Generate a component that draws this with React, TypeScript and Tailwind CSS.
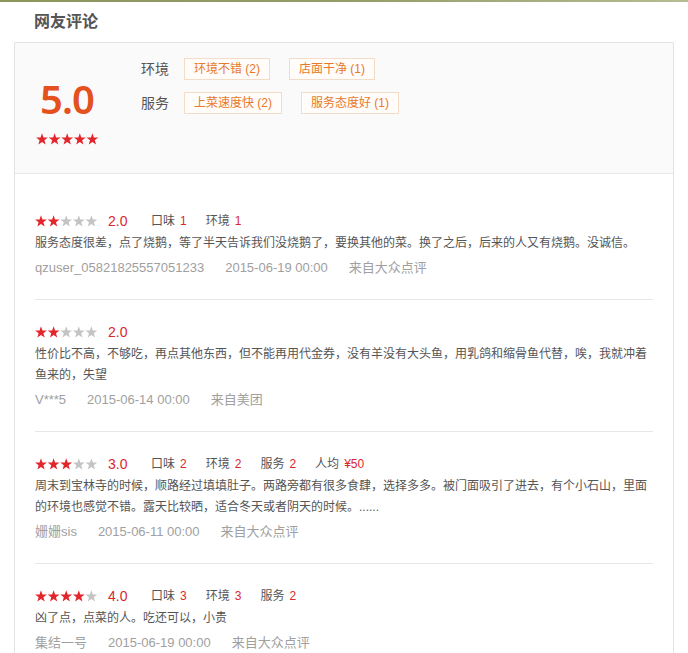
import React from "react";

const STAR =
  "6,0.3 7.47,4.48 11.9,4.58 8.38,7.27 9.64,11.52 6,9 2.36,11.52 3.62,7.27 0.1,4.58 4.53,4.48";

function Stars({ n }: { n: number }) {
  return (
    <svg width="63" height="12" viewBox="0 0 63 12" className="block">
      {[0, 1, 2, 3, 4].map((i) => (
        <polygon
          key={i}
          points={STAR}
          transform={`translate(${i * 12.6},0)`}
          fill={i < n ? "#e2262c" : "#c4c4c4"}
        />
      ))}
    </svg>
  );
}

type Review = {
  stars: number;
  score: string;
  items: [string, string][];
  text: string;
  user: string;
  date: string;
  source: string;
};

const reviews: Review[] = [
  {
    stars: 2,
    score: "2.0",
    items: [
      ["口味", "1"],
      ["环境", "1"],
    ],
    text: "服务态度很差，点了烧鹅，等了半天告诉我们没烧鹅了，要换其他的菜。换了之后，后来的人又有烧鹅。没诚信。",
    user: "qzuser_05821825557051233",
    date: "2015-06-19 00:00",
    source: "来自大众点评",
  },
  {
    stars: 2,
    score: "2.0",
    items: [],
    text: "性价比不高，不够吃，再点其他东西，但不能再用代金券，没有羊没有大头鱼，用乳鸽和缩骨鱼代替，唉，我就冲着鱼来的，失望",
    user: "V***5",
    date: "2015-06-14 00:00",
    source: "来自美团",
  },
  {
    stars: 3,
    score: "3.0",
    items: [
      ["口味", "2"],
      ["环境", "2"],
      ["服务", "2"],
      ["人均", "¥50"],
    ],
    text: "周末到宝林寺的时候，顺路经过填填肚子。两路旁都有很多食肆，选择多多。被门面吸引了进去，有个小石山，里面的环境也感觉不错。露天比较晒，适合冬天或者阴天的时候。......",
    user: "姗姗sis",
    date: "2015-06-11 00:00",
    source: "来自大众点评",
  },
  {
    stars: 4,
    score: "4.0",
    items: [
      ["口味", "3"],
      ["环境", "3"],
      ["服务", "2"],
    ],
    text: "凶了点，点菜的人。吃还可以，小贵",
    user: "集结一号",
    date: "2015-06-19 00:00",
    source: "来自大众点评",
  },
];

function Tag({ children }: { children: React.ReactNode }) {
  return (
    <span className="h-[22px] px-[9px] flex items-center border border-[#f3dcc8] bg-[#fffcf9] text-[12px] text-[#e7792b] leading-none whitespace-nowrap">
      {children}
    </span>
  );
}

export default function App() {
  return (
    <div className="w-[688px] h-[653px] overflow-hidden bg-white font-['Liberation_Sans','Noto_Sans_CJK_SC',sans-serif]">
      <div className="h-[2px] bg-gradient-to-r from-[#8d955d] via-[#959c67] to-[#b7bb92]" />
      <div className="h-[40px] flex items-center pl-[34px] text-[16px] font-bold text-[#555]">
        网友评论
      </div>
      <div className="ml-[14px] w-[660px] border border-[#e4e4e4]">
        <div className="flex h-[131px] bg-[#fafafa] border-b border-[#e8e8e8] pt-[15px] pl-[20px]">
          <div className="w-[64px] flex flex-col items-center">
            <div className="mt-[21px] h-[40px] leading-[40px] text-[40px] font-semibold tracking-[-1px] text-[#e4501e] font-['Noto_Sans',sans-serif]">
              5.0
            </div>
            <div className="mt-[14px]">
              <Stars n={5} />
            </div>
          </div>
          <div className="ml-[42px] flex flex-col gap-[12px]">
            <div className="flex items-center">
              <span className="w-[28px] mr-[15px] text-[14px] text-[#555] leading-none whitespace-nowrap">环境</span>
              <div className="flex gap-[19px]">
                <Tag>环境不错 (2)</Tag>
                <Tag>店面干净 (1)</Tag>
              </div>
            </div>
            <div className="flex items-center">
              <span className="w-[28px] mr-[15px] text-[14px] text-[#555] leading-none whitespace-nowrap">服务</span>
              <div className="flex gap-[19px]">
                <Tag>上菜速度快 (2)</Tag>
                <Tag>服务态度好 (1)</Tag>
              </div>
            </div>
          </div>
        </div>
        <div className="px-[20px] pt-[15px]">
          {reviews.map((r, idx) => (
            <div
              key={idx}
              className={
                "pt-[20px] pb-[19px] " +
                (idx < reviews.length - 1 ? "border-b border-[#e6e6e6]" : "")
              }
            >
              <div className="h-[24px] flex items-center">
                <Stars n={r.stars} />
                <span className="ml-[10px] w-[43px] text-[14px] text-[#d8282d]">{r.score}</span>
                {r.items.map(([k, v], i) => (
                  <span key={i} className="mr-[19px] text-[12px] text-[#555] whitespace-nowrap">
                    {k}
                    <span className="ml-[5px] text-[#d8282d]">{v}</span>
                  </span>
                ))}
              </div>
              <div className="text-[12px] leading-[21px] text-[#555]">{r.text}</div>
              <div className="mt-[2px] h-[24px] flex items-center gap-[21px] text-[13px] text-[#a0a0a0] whitespace-nowrap">
                <span>{r.user}</span>
                <span>{r.date}</span>
                <span>{r.source}</span>
              </div>
            </div>
          ))}
        </div>
      </div>
    </div>
  );
}
